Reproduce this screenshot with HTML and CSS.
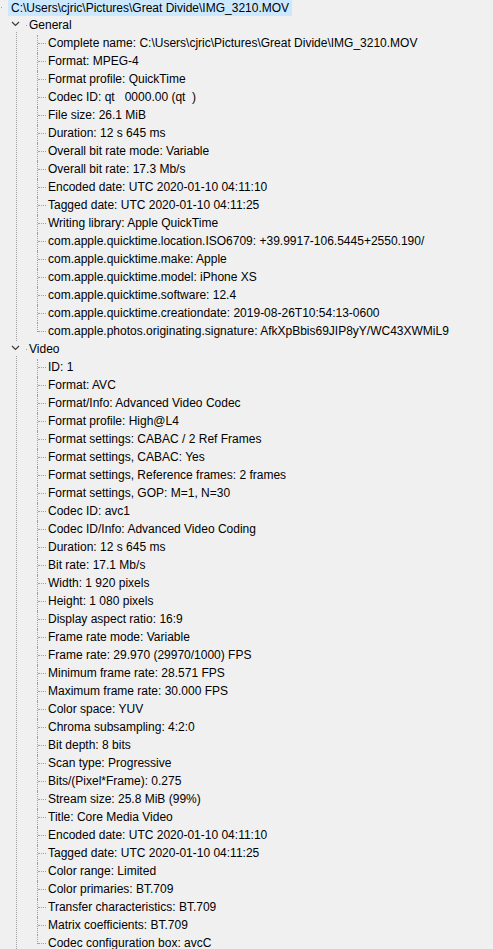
FILE: index.html
```html
<!DOCTYPE html>
<html>
<head>
<meta charset="utf-8">
<title>MediaInfo</title>
<link rel="stylesheet" href="styles.css">
</head>
<body>
<div class="tree">
  <div class="row root"><span class="stub"></span><span class="label selected">C:\Users\cjric\Pictures\Great Divide\IMG_3210.MOV</span></div>

  <div class="section">
    <div class="row head"><span class="twisty"><svg width="9" height="15" viewBox="0 0 9 15"><polyline points="1,5 4.5,8.5 8,5" fill="none" stroke="#3c3c3c" stroke-width="1.2"/></svg></span><span class="dot"></span><span class="label">General</span></div>
    <ul class="leaves">
      <li class="row leaf"><span class="conn"><span class="h"></span></span><span class="label">Complete name: C:\Users\cjric\Pictures\Great Divide\IMG_3210.MOV</span></li>
      <li class="row leaf"><span class="conn"><span class="h"></span></span><span class="label">Format: MPEG-4</span></li>
      <li class="row leaf"><span class="conn"><span class="h"></span></span><span class="label">Format profile: QuickTime</span></li>
      <li class="row leaf"><span class="conn"><span class="h"></span></span><span class="label">Codec ID: qt   0000.00 (qt  )</span></li>
      <li class="row leaf"><span class="conn"><span class="h"></span></span><span class="label">File size: 26.1 MiB</span></li>
      <li class="row leaf"><span class="conn"><span class="h"></span></span><span class="label">Duration: 12 s 645 ms</span></li>
      <li class="row leaf"><span class="conn"><span class="h"></span></span><span class="label">Overall bit rate mode: Variable</span></li>
      <li class="row leaf"><span class="conn"><span class="h"></span></span><span class="label">Overall bit rate: 17.3 Mb/s</span></li>
      <li class="row leaf"><span class="conn"><span class="h"></span></span><span class="label">Encoded date: UTC 2020-01-10 04:11:10</span></li>
      <li class="row leaf"><span class="conn"><span class="h"></span></span><span class="label">Tagged date: UTC 2020-01-10 04:11:25</span></li>
      <li class="row leaf"><span class="conn"><span class="h"></span></span><span class="label">Writing library: Apple QuickTime</span></li>
      <li class="row leaf"><span class="conn"><span class="h"></span></span><span class="label">com.apple.quicktime.location.ISO6709: +39.9917-106.5445+2550.190/</span></li>
      <li class="row leaf"><span class="conn"><span class="h"></span></span><span class="label">com.apple.quicktime.make: Apple</span></li>
      <li class="row leaf"><span class="conn"><span class="h"></span></span><span class="label">com.apple.quicktime.model: iPhone XS</span></li>
      <li class="row leaf"><span class="conn"><span class="h"></span></span><span class="label">com.apple.quicktime.software: 12.4</span></li>
      <li class="row leaf"><span class="conn"><span class="h"></span></span><span class="label">com.apple.quicktime.creationdate: 2019-08-26T10:54:13-0600</span></li>
      <li class="row leaf"><span class="conn"><span class="h"></span></span><span class="label">com.apple.photos.originating.signature: AfkXpBbis69JIP8yY/WC43XWMiL9</span></li>
    </ul>
  </div>

  <div class="section">
    <div class="row head"><span class="twisty"><svg width="9" height="15" viewBox="0 0 9 15"><polyline points="1,5 4.5,8.5 8,5" fill="none" stroke="#3c3c3c" stroke-width="1.2"/></svg></span><span class="dot"></span><span class="label">Video</span></div>
    <ul class="leaves">
      <li class="row leaf"><span class="conn"><span class="h"></span></span><span class="label">ID: 1</span></li>
      <li class="row leaf"><span class="conn"><span class="h"></span></span><span class="label">Format: AVC</span></li>
      <li class="row leaf"><span class="conn"><span class="h"></span></span><span class="label">Format/Info: Advanced Video Codec</span></li>
      <li class="row leaf"><span class="conn"><span class="h"></span></span><span class="label">Format profile: High@L4</span></li>
      <li class="row leaf"><span class="conn"><span class="h"></span></span><span class="label">Format settings: CABAC / 2 Ref Frames</span></li>
      <li class="row leaf"><span class="conn"><span class="h"></span></span><span class="label">Format settings, CABAC: Yes</span></li>
      <li class="row leaf"><span class="conn"><span class="h"></span></span><span class="label">Format settings, Reference frames: 2 frames</span></li>
      <li class="row leaf"><span class="conn"><span class="h"></span></span><span class="label">Format settings, GOP: M=1, N=30</span></li>
      <li class="row leaf"><span class="conn"><span class="h"></span></span><span class="label">Codec ID: avc1</span></li>
      <li class="row leaf"><span class="conn"><span class="h"></span></span><span class="label">Codec ID/Info: Advanced Video Coding</span></li>
      <li class="row leaf"><span class="conn"><span class="h"></span></span><span class="label">Duration: 12 s 645 ms</span></li>
      <li class="row leaf"><span class="conn"><span class="h"></span></span><span class="label">Bit rate: 17.1 Mb/s</span></li>
      <li class="row leaf"><span class="conn"><span class="h"></span></span><span class="label">Width: 1 920 pixels</span></li>
      <li class="row leaf"><span class="conn"><span class="h"></span></span><span class="label">Height: 1 080 pixels</span></li>
      <li class="row leaf"><span class="conn"><span class="h"></span></span><span class="label">Display aspect ratio: 16:9</span></li>
      <li class="row leaf"><span class="conn"><span class="h"></span></span><span class="label">Frame rate mode: Variable</span></li>
      <li class="row leaf"><span class="conn"><span class="h"></span></span><span class="label">Frame rate: 29.970 (29970/1000) FPS</span></li>
      <li class="row leaf"><span class="conn"><span class="h"></span></span><span class="label">Minimum frame rate: 28.571 FPS</span></li>
      <li class="row leaf"><span class="conn"><span class="h"></span></span><span class="label">Maximum frame rate: 30.000 FPS</span></li>
      <li class="row leaf"><span class="conn"><span class="h"></span></span><span class="label">Color space: YUV</span></li>
      <li class="row leaf"><span class="conn"><span class="h"></span></span><span class="label">Chroma subsampling: 4:2:0</span></li>
      <li class="row leaf"><span class="conn"><span class="h"></span></span><span class="label">Bit depth: 8 bits</span></li>
      <li class="row leaf"><span class="conn"><span class="h"></span></span><span class="label">Scan type: Progressive</span></li>
      <li class="row leaf"><span class="conn"><span class="h"></span></span><span class="label">Bits/(Pixel*Frame): 0.275</span></li>
      <li class="row leaf"><span class="conn"><span class="h"></span></span><span class="label">Stream size: 25.8 MiB (99%)</span></li>
      <li class="row leaf"><span class="conn"><span class="h"></span></span><span class="label">Title: Core Media Video</span></li>
      <li class="row leaf"><span class="conn"><span class="h"></span></span><span class="label">Encoded date: UTC 2020-01-10 04:11:10</span></li>
      <li class="row leaf"><span class="conn"><span class="h"></span></span><span class="label">Tagged date: UTC 2020-01-10 04:11:25</span></li>
      <li class="row leaf"><span class="conn"><span class="h"></span></span><span class="label">Color range: Limited</span></li>
      <li class="row leaf"><span class="conn"><span class="h"></span></span><span class="label">Color primaries: BT.709</span></li>
      <li class="row leaf"><span class="conn"><span class="h"></span></span><span class="label">Transfer characteristics: BT.709</span></li>
      <li class="row leaf"><span class="conn"><span class="h"></span></span><span class="label">Matrix coefficients: BT.709</span></li>
      <li class="row leaf"><span class="conn"><span class="h"></span></span><span class="label">Codec configuration box: avcC</span></li>
    </ul>
  </div>
</div>
</body>
</html>
```

FILE: styles.css
```css
html, body {
  margin: 0;
  padding: 0;
  background: #f0f0f0;
  overflow: hidden;
}

.tree {
  font-family: "Liberation Sans", Arial, sans-serif;
  font-size: 12px;
  color: #000;
  margin-top: -1px;
}

.row {
  display: flex;
  align-items: flex-start;
  height: 18px;
}

.label {
  display: block;
  height: 16px;
  line-height: 16px;
  white-space: pre;
}

.root .stub {
  width: 1px;
  height: 1px;
  margin: 8px 6px 0 1px;
  background: #a0a0a0;
}

.root .selected {
  background: #cce8ff;
  padding: 0 3px;
  margin-top: 1px;
  line-height: 14px;
  height: 16px;
  padding-top: 1px;
  box-sizing: border-box;
}

.section {
  background-image: linear-gradient(#a0a0a0 50%, transparent 50%);
  background-size: 1px 2px;
  background-repeat: repeat-y;
  background-position: 16px 1px;
}

.head {
  padding-left: 11px;
}

.twisty {
  display: block;
  width: 9px;
  height: 15px;
  background: #f0f0f0;
}

.section + .section .twisty {
  height: 13px;
  margin-top: 1px;
}

.twisty svg {
  display: block;
}

.section + .section .twisty svg {
  margin-top: -1px;
}

.head .dot {
  width: 1px;
  height: 1px;
  margin: 8px 2px 0 6px;
  background: #a0a0a0;
}

.leaves {
  list-style: none;
  margin: 0;
  padding: 0;
}

.leaf {
  padding-left: 37px;
}

.conn {
  display: block;
  height: 18px;
  border-left: 1px dotted #a0a0a0;
}

.leaf:last-child .conn {
  height: 9px;
}

.conn .h {
  display: block;
  width: 8px;
  margin-top: 8px;
  border-top: 1px dotted #a0a0a0;
}

.leaf .label {
  margin-left: 2px;
}
```
